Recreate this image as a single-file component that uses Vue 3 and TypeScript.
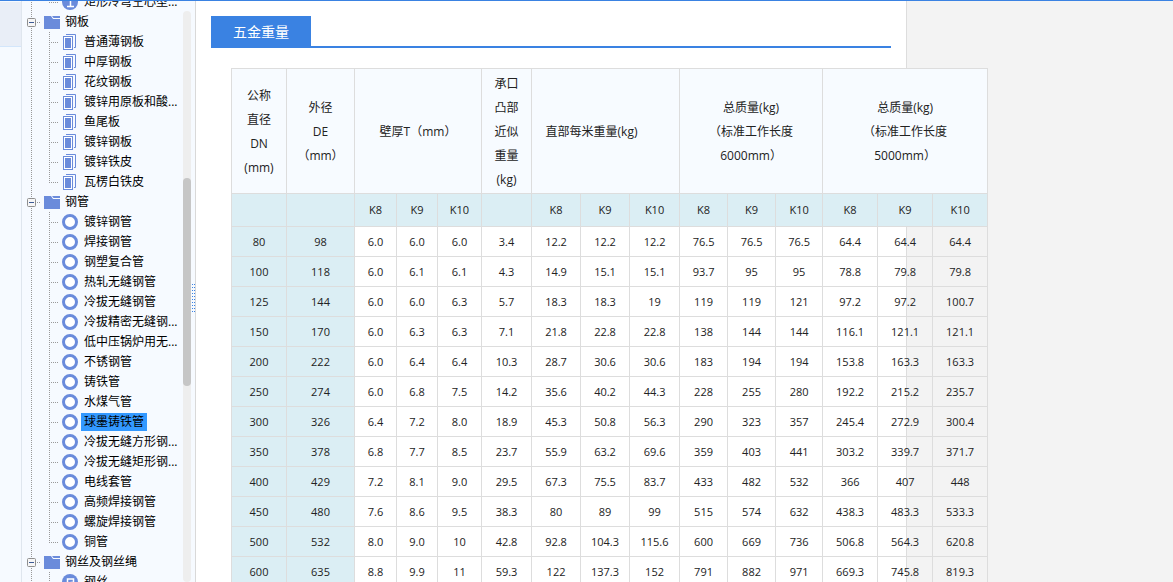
<script setup lang="ts">
type Icon = 'mark' | 'sheet' | 'ring' | 'wire'

interface TreeItem {
  name: string
  icon: Icon
  active?: boolean
}

interface TreeGroup {
  name: string
  items: TreeItem[]
}

const make = (icon: Icon, names: string): TreeItem[] =>
  names.split(' ').map((name) => ({ name, icon, active: name === '球墨铸铁管' }))

const sections: TreeGroup[] = [
  { name: '', items: make('mark', '矩形冷弯空心型...') },
  { name: '钢板', items: make('sheet', '普通薄钢板 中厚钢板 花纹钢板 镀锌用原板和酸... 鱼尾板 镀锌钢板 镀锌铁皮 瓦楞白铁皮') },
  {
    name: '钢管',
    items: make(
      'ring',
      '镀锌钢管 焊接钢管 钢塑复合管 热轧无缝钢管 冷拔无缝钢管 冷拔精密无缝钢... 低中压锅炉用无... 不锈钢管 铸铁管 水煤气管 球墨铸铁管 冷拔无缝方形钢... 冷拔无缝矩形钢... 电线套管 高频焊接钢管 螺旋焊接钢管 铜管',
    ),
  },
  { name: '钢丝及钢丝绳', items: make('wire', '钢丝') },
]

const columns = [55, 68, 42, 41, 44, 50, 49, 49, 50, 48, 48, 47, 55, 55, 55]

const grades = ['', '', 'K8', 'K9', 'K10', '', 'K8', 'K9', 'K10', 'K8', 'K9', 'K10', 'K8', 'K9', 'K10']

const rows: string[][] = [
  '80 98 6.0 6.0 6.0 3.4 12.2 12.2 12.2 76.5 76.5 76.5 64.4 64.4 64.4',
  '100 118 6.0 6.1 6.1 4.3 14.9 15.1 15.1 93.7 95 95 78.8 79.8 79.8',
  '125 144 6.0 6.0 6.3 5.7 18.3 18.3 19 119 119 121 97.2 97.2 100.7',
  '150 170 6.0 6.3 6.3 7.1 21.8 22.8 22.8 138 144 144 116.1 121.1 121.1',
  '200 222 6.0 6.4 6.4 10.3 28.7 30.6 30.6 183 194 194 153.8 163.3 163.3',
  '250 274 6.0 6.8 7.5 14.2 35.6 40.2 44.3 228 255 280 192.2 215.2 235.7',
  '300 326 6.4 7.2 8.0 18.9 45.3 50.8 56.3 290 323 357 245.4 272.9 300.4',
  '350 378 6.8 7.7 8.5 23.7 55.9 63.2 69.6 359 403 441 303.2 339.7 371.7',
  '400 429 7.2 8.1 9.0 29.5 67.3 75.5 83.7 433 482 532 366 407 448',
  '450 480 7.6 8.6 9.5 38.3 80 89 99 515 574 632 438.3 483.3 533.3',
  '500 532 8.0 9.0 10 42.8 92.8 104.3 115.6 600 669 736 506.8 564.3 620.8',
  '600 635 8.8 9.9 11 59.3 122 137.3 152 791 882 971 669.3 745.8 819.3',
].map((line) => line.split(' '))
</script>

<template>
  <div class="shell">
    <div class="rail"><div class="rail-tab"></div></div>

    <nav class="sidebar" aria-label="材料分类">
      <ul class="tree">
        <li v-for="(section, s) in sections" :key="s" class="section">
          <div v-if="section.name" class="row group">
            <button class="toggle" type="button" aria-label="收起">
              <svg width="9" height="9" viewBox="0 0 9 9">
                <rect x=".5" y=".5" width="8" height="8" rx="1" fill="#f6f6f6" stroke="#8f8f8f" />
                <path d="M2 4.500h5" stroke="#3c5a96" />
              </svg>
            </button>
            <i class="stub"></i>
            <svg class="folder" width="16" height="13" viewBox="0 0 16 13">
              <path d="M0 0h7l2 3h7v10H0z" fill="#6a8bdb" />
              <path d="M8 0h8v2h-6.500z" fill="#6a8bdb" />
            </svg>
            <a class="label" href="#">{{ section.name }}</a>
          </div>
          <ul class="items">
            <li v-for="item in section.items" :key="item.name" class="row item">
              <svg v-if="item.icon === 'sheet'" class="icon" width="16" height="16" viewBox="0 0 16 16">
                <path d="M4 .5h9.500v13H12" fill="none" stroke="#6a8bdb" />
                <rect x="1.500" y="2.500" width="9" height="13" fill="#fff" stroke="#6a8bdb" />
                <path d="M3 4h6v10H3z" fill="#6a8bdb" />
              </svg>
              <svg v-else-if="item.icon === 'ring'" class="icon" width="16" height="16" viewBox="0 0 16 16">
                <circle cx="8" cy="8" r="6.500" fill="#fff" stroke="#6a8bdb" stroke-width="3" />
              </svg>
              <svg v-else class="icon" width="16" height="16" viewBox="0 0 16 16">
                <circle cx="8" cy="8" r="8" fill="#6a8bdb" />
                <path v-if="item.icon === 'mark'" d="M6 4.500h2.500V12M5 12.500h7" fill="none" stroke="#fff" stroke-width="1.500" />
                <path v-else d="M5.500 12V5h6v3.500h-3" fill="none" stroke="#fff" stroke-width="1.500" />
              </svg>
              <a class="label" :class="{ active: item.active }" href="#">{{ item.name }}</a>
            </li>
          </ul>
        </li>
      </ul>
      <div class="scroll-track"><div class="scroll-thumb"></div></div>
      <div class="splitter">
        <svg class="grip" width="3" height="28" viewBox="0 0 3 28" shape-rendering="crispEdges">
          <path d="M.5 0v28M2.500 0v28" stroke="#3a82e2" stroke-dasharray="1 2" />
        </svg>
      </div>
    </nav>

    <main class="panel">
      <header class="title-bar"><h1 class="title">五金重量</h1></header>
      <table class="weights">
        <colgroup>
          <col v-for="(width, c) in columns" :key="c" :style="{ width: width + 'px' }" />
        </colgroup>
        <thead>
          <tr class="heads">
            <th>公称<br />直径<br />DN<br />(mm)</th>
            <th>外径<br />DE<br />（mm）</th>
            <th colspan="3">壁厚T（mm）</th>
            <th>承口<br />凸部<br />近似<br />重量<br />(kg)</th>
            <th colspan="3" class="per-metre">直部每米重量(kg)</th>
            <th colspan="3">总质量(kg)<br />（标准工作长度<br />6000mm）</th>
            <th colspan="3">总质量(kg)<br />（标准工作长度<br />5000mm）</th>
          </tr>
          <tr class="grades">
            <th v-for="(grade, g) in grades" :key="g">{{ grade }}</th>
          </tr>
        </thead>
        <tbody>
          <tr v-for="row in rows" :key="row[0]">
            <td v-for="(cell, c) in row" :key="c" :class="{ size: c < 2 }">{{ cell }}</td>
          </tr>
        </tbody>
      </table>
    </main>
    <aside class="gutter"></aside>
  </div>
</template>

<style>
body {
  margin: 0;
}
</style>

<style scoped>
.shell {
  box-sizing: border-box;
  display: flex;
  height: 100vh;
  overflow: hidden;
  border-top: 1px solid #3a82e2;
  background: #fff;
  color: #222;
  font: 12px/20px "Open Sans", "Noto Sans CJK SC", sans-serif;
}

ul {
  margin: 0;
  padding: 0;
  list-style: none;
}

.rail {
  flex: 0 0 21px;
  border-right: 1px solid #dfe6ee;
  background: #f6faff;
}

.rail-tab {
  height: 44px;
  margin-top: 1px;
  border-bottom: 1px solid #d3e6fb;
  background: #e9eef7;
}

.sidebar {
  display: flex;
  flex: 0 0 173px;
  border-right: 1px solid #d9d9d9;
  background: #f6faff;
}

.tree {
  flex: 1;
  margin-top: -9px;
}

.section {
  background: linear-gradient(#999 50%, transparent 50%) 9px 0 / 1px 2px repeat-y;
}

.row {
  display: flex;
  align-items: center;
  height: 20px;
}

.group {
  padding-left: 5px;
}

.toggle {
  display: flex;
  padding: 0;
  border: 0;
  background: none;
}

.stub {
  width: 4px;
  height: 1px;
  margin-right: 4px;
  background: repeating-linear-gradient(90deg, transparent 0 1px, #999 1px 2px);
}

.folder {
  margin-right: 4px;
}

.items {
  margin-left: 27px;
}

/* Dotted branch: a vertical guide and a short arm at mid-row */
.item {
  position: relative;
  padding-left: 13px;
}

.item::before,
.item::after {
  position: absolute;
  left: 0;
  content: "";
}

.item::before {
  top: 0;
  width: 1px;
  height: 20px;
  background: repeating-linear-gradient(#999 0 1px, transparent 1px 2px);
}

.item:last-child::before {
  height: 10px;
}

.item::after {
  top: 10px;
  width: 9px;
  height: 1px;
  background: repeating-linear-gradient(90deg, #999 0 1px, transparent 1px 2px);
}

.icon {
  flex: none;
  margin-right: 3px;
}

.label {
  height: 18px;
  padding: 0 3px;
  color: #000;
  line-height: 18px;
  text-decoration: none;
  white-space: nowrap;
}

.group .label {
  padding: 0 1px;
}

.active {
  background: #3399ff;
}

.scroll-track {
  flex: none;
  width: 8px;
  margin-top: 10px;
  border-radius: 4px;
  background: #eee;
}

.scroll-thumb {
  height: 208px;
  margin-top: 167px;
  border-radius: 4px;
  background: #c6c6c6;
}

.splitter {
  display: flex;
  flex: none;
  align-items: center;
  width: 4px;
}

.grip {
  margin: 12px 0 0 1px;
}

.panel {
  position: relative;
  z-index: 1;
  flex: 1;
  min-width: 0;
  padding: 15px 15px 0;
}

.title-bar {
  display: flex;
  height: 30px;
  border-bottom: 2px solid #3a82e2;
}

.title {
  width: 100px;
  height: 32px;
  margin: 0;
  background: #3a82e2;
  color: #fff;
  font-size: 14px;
  font-weight: 400;
  line-height: 32px;
  text-align: center;
}

.weights {
  width: 757px;
  margin: 20px 0 0 20px;
  border: 1px solid #ddd;
  border-width: 1px 0 0 1px;
  border-spacing: 0;
  table-layout: fixed;
}

th,
td {
  box-sizing: border-box;
  height: 30px;
  padding: 0;
  border: 1px solid #ddd;
  border-width: 0 1px 1px 0;
  font-size: 11px;
  font-weight: 400;
  line-height: 20px;
  text-align: center;
}

.heads th {
  height: 125px;
  padding-top: 2px;
  background: #f7fbff;
  font-size: 12px;
  line-height: 24px;
}

.heads .per-metre {
  padding-right: 28px;
}

.grades th {
  height: 33px;
  background: #dbeef4;
}

.size {
  background: #dbeef4;
}

.gutter {
  flex: 0 0 266px;
  border-left: 1px solid #ddd;
  background: #f3f3f3;
}
</style>
